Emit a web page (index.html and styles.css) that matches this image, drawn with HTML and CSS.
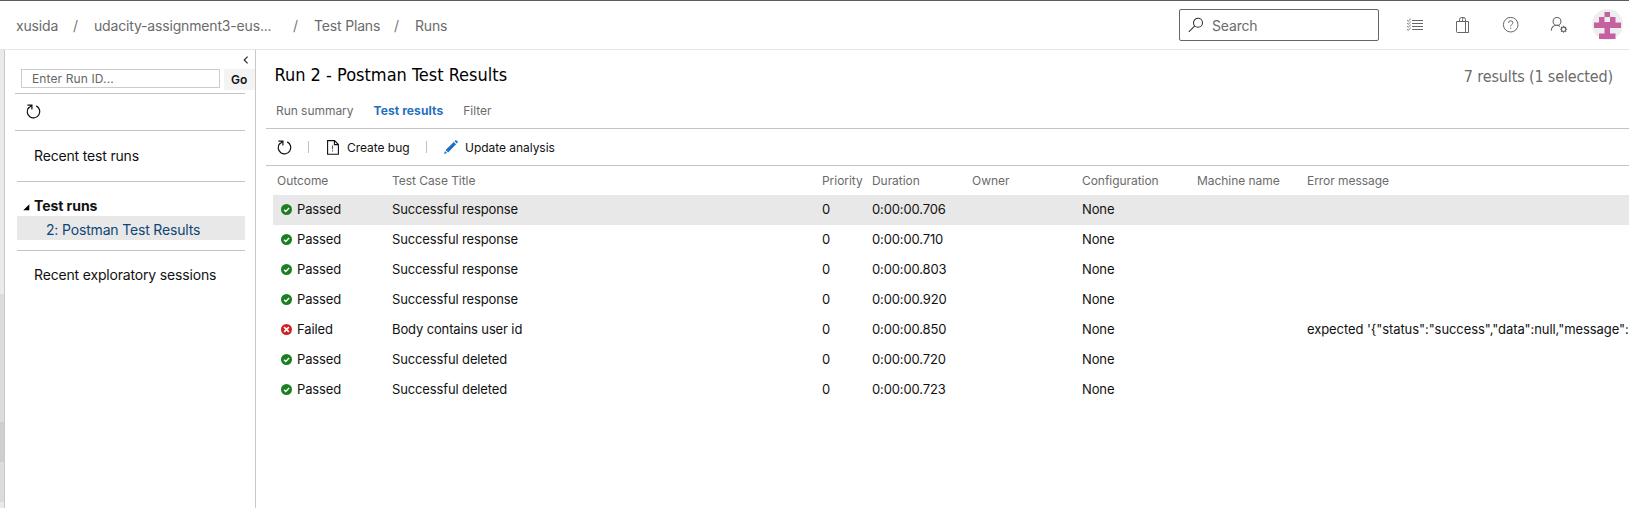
FILE: index.html
```
<!DOCTYPE html>
<html lang="en">
<head>
<meta charset="utf-8">
<title>Runs - Test Plans</title>
<link rel="stylesheet" href="styles.css">
</head>
<body>
<svg class="defs" aria-hidden="true">
  <symbol id="refresh" viewBox="0 0 15 15">
    <path d="M10.2 1.9A6.3 6.3 0 1 1 2.7 3.5M1.4 1.1H5.9V5.4M5.7 1.3L2.7 4.1" fill="none" stroke="currentColor" stroke-width="1.2"/>
  </symbol>
  <symbol id="passed" viewBox="0 0 12 12">
    <circle cx="6" cy="6" r="6" fill="#1b7f22"/>
    <path d="M3.3 6.3L5.2 8.1L8.8 4.4" fill="none" stroke="#fff" stroke-width="1.5"/>
  </symbol>
  <symbol id="failed" viewBox="0 0 12 12">
    <circle cx="6" cy="6" r="6" fill="#d3201f"/>
    <path d="M3.4 3.4L8.6 8.6M8.6 3.4L3.4 8.6" fill="none" stroke="#fff" stroke-width="1.8"/>
  </symbol>
</svg>

<header class="topbar">
  <nav class="crumbs">
    <span class="crumb crumb-org">xusida</span><span class="slash">/</span>
    <span class="crumb crumb-project">udacity-assignment3-eus...</span><span class="slash">/</span>
    <span class="crumb crumb-plans">Test Plans</span><span class="slash">/</span>
    <span class="crumb">Runs</span>
  </nav>
  <div class="search">
    <svg width="16" height="16" viewBox="0 0 16 16" fill="none" stroke="#333" stroke-width="1.1"><circle cx="10" cy="5.7" r="4.5"/><path d="M6.8 8.9L.8 14.9"/></svg>
    <span>Search</span>
  </div>
  <div class="tools">
    <svg width="18" height="18" viewBox="0 0 18 18" fill="none" stroke="#666" stroke-width="1"><path d="M6 4.5H17M6 7.5H17M6 10.5H17M6 13.5H17"/><path d="M1 4.2L2.2 5.3L4.8 2.8M1 7.2L2.2 8.3L4.8 5.8M1 10.2L2.2 11.3L4.8 8.8M1 13.2L2.2 14.3L4.8 11.8" stroke-width=".9"/></svg>
    <svg width="18" height="18" viewBox="0 0 18 18" fill="none" stroke="#666" stroke-width="1"><path d="M2.5 5.5H14.5V16.5H3.5Q2.5 16.5 2.5 15.5ZM11.5 5.5V15.5Q11.5 16.5 12.5 16.5H13.5Q14.5 16.5 14.5 15.5M5.5 5.5V3.5Q5.5 1.5 7.5 1.5H9.5Q11.5 1.5 11.5 3.5V5.5M8.5 5.5V3.5Q8.5 1.5 10 1.5"/></svg>
    <svg width="18" height="18" viewBox="0 0 18 18" fill="none" stroke="#666" stroke-width="1"><circle cx="8.7" cy="8.7" r="7.3"/><path d="M6.5 6.9Q6.5 4.8 8.7 4.8T10.9 6.7Q10.9 7.8 9.6 8.6Q8.7 9.2 8.7 10.4M8.7 11.7V12.9"/></svg>
    <svg width="18" height="18" viewBox="0 0 18 18" fill="none" stroke="#666" stroke-width="1.1"><circle cx="7" cy="5.4" r="3.9"/><path d="M1.3 14.6Q1.6 9.4 7 9.3Q8.5 9.3 10 10.6"/><circle cx="13.6" cy="13.3" r="2.2"/><path d="M13.6 9.8V11.1M13.6 15.5V16.8M10.1 13.3H11.4M15.8 13.3H17.1M11.1 10.8L12.1 11.8M15.1 14.8L16.1 15.8M16.1 10.8L15.1 11.8M12.1 14.8L11.1 15.8"/></svg>
  </div>
  <svg class="avatar" width="31" height="31" viewBox="0 0 31 31"><circle cx="15.5" cy="15.5" r="15.5" fill="#eee"/><path fill="#c561a1" d="M12.5 3H18V8H12.5ZM7 8H12.5V13H18V8H23.5V13.5H29V19H18V24.5H23.5V30H7V24.5H12.5V19H2V13.5H7Z"/></svg>
</header>

<div class="body">
  <div class="rail"><div class="track"><div class="thumb"></div></div></div>

  <aside class="side">
    <div class="collapse"><svg width="6" height="8" viewBox="0 0 6 8" fill="none" stroke="#222" stroke-width="1.1"><path d="M4.6 .7L1.2 4L4.6 7.3"/></svg></div>
    <div class="lookup"><div class="run-id">Enter Run ID...</div><div class="go">Go</div></div>
    <div class="side-tools"><svg width="15" height="15"><use href="#refresh"/></svg></div>
    <div class="group recent">Recent test runs</div>
    <div class="group runs">
      <div class="runs-title"><svg width="7" height="7" viewBox="0 0 7 7"><path d="M6.3 .3V6.3H.3Z"/></svg><b>Test runs</b></div>
      <div class="run-item">2: Postman Test Results</div>
    </div>
    <div class="sessions">Recent exploratory sessions</div>
  </aside>

  <main class="main">
    <div class="heading"><h1>Run 2 - Postman Test Results</h1><span class="count">7 results (1 selected)</span></div>
    <nav class="tabs"><span>Run summary</span><b>Test results</b><span>Filter</span></nav>
    <div class="toolbar">
      <svg width="15" height="15"><use href="#refresh"/></svg>
      <i class="sep sep-first"></i>
      <svg class="bug" width="12" height="15" viewBox="0 0 12 15" fill="none" stroke="#111" stroke-width="1.1"><path d="M.6 .6H7.5L11.4 4.5V14.2H.6ZM7.4 .8V4.6H11.2"/><path d="M5.5 5.5V9.2M5.5 10.3V11.6" stroke="#555"/></svg>
      <span class="create">Create bug</span>
      <i class="sep"></i>
      <svg class="pencil" width="14" height="14" viewBox="0 0 14 14" fill="#1f6fc2"><path d="M1.6 9.9L9.7 1.9L12.1 4.3L4.1 12.4ZM10.5 1.2L11.4 .3Q12.2-.1 13.1.8T13.7 2.5L12.8 3.5ZM1 11L3 13L0 14Z"/></svg>
      <span>Update analysis</span>
    </div>
    <div class="grid">
      <div class="row head"><span>Outcome</span><span>Test Case Title</span><span>Priority</span><span>Duration</span><span>Owner</span><span>Configuration</span><span>Machine name</span><span>Error message</span></div>
      <div class="row selected"><span class="outcome"><svg width="11" height="11"><use href="#passed"/></svg>Passed</span><span>Successful response</span><span>0</span><span>0:00:00.706</span><span></span><span>None</span><span></span><span></span></div>
      <div class="row"><span class="outcome"><svg width="11" height="11"><use href="#passed"/></svg>Passed</span><span>Successful response</span><span>0</span><span>0:00:00.710</span><span></span><span>None</span><span></span><span></span></div>
      <div class="row"><span class="outcome"><svg width="11" height="11"><use href="#passed"/></svg>Passed</span><span>Successful response</span><span>0</span><span>0:00:00.803</span><span></span><span>None</span><span></span><span></span></div>
      <div class="row"><span class="outcome"><svg width="11" height="11"><use href="#passed"/></svg>Passed</span><span>Successful response</span><span>0</span><span>0:00:00.920</span><span></span><span>None</span><span></span><span></span></div>
      <div class="row"><span class="outcome"><svg width="11" height="11"><use href="#failed"/></svg>Failed</span><span>Body contains user id</span><span>0</span><span>0:00:00.850</span><span></span><span>None</span><span></span><span class="error">expected '{"status":"success","data":null,"message":</span></div>
      <div class="row"><span class="outcome"><svg width="11" height="11"><use href="#passed"/></svg>Passed</span><span>Successful deleted</span><span>0</span><span>0:00:00.720</span><span></span><span>None</span><span></span><span></span></div>
      <div class="row"><span class="outcome"><svg width="11" height="11"><use href="#passed"/></svg>Passed</span><span>Successful deleted</span><span>0</span><span>0:00:00.723</span><span></span><span>None</span><span></span><span></span></div>
    </div>
  </main>
</div>
</body>
</html>
```

FILE: styles.css
```
* { box-sizing: border-box; }

body {
  margin: 0;
  height: 508px;
  overflow: hidden;
  background: #fff;
  color: #111;
  font: 14px/20px Inter, "Liberation Sans", sans-serif;
  letter-spacing: -0.17px;
  white-space: nowrap;
}

svg { display: block; flex: none; }
.defs { display: none; }

/* Top bar */
.topbar {
  display: flex;
  align-items: center;
  height: 50px;
  padding-left: 16px;
  border-top: 1px solid #5c5c60;
  border-bottom: 1px solid #e6e6e6;
  color: #6b6b6b;
}
.crumbs { display: flex; flex: none; width: 1163px; padding-top: 1px; }
.crumb-org { width: 57px; }
.crumb-project { width: 199px; }
.crumb-plans { width: 80px; }
.slash { width: 21px; color: #777; }
.search {
  display: flex;
  align-items: center;
  gap: 8px;
  width: 200px;
  height: 32px;
  padding-left: 8px;
  border: 1px solid #666;
  border-radius: 2px;
}
.search span { padding-top: 2px; }
.tools { display: flex; gap: 30px; margin-left: 27px; }
.avatar { margin: -1px 0 0 24px; }

/* Left rail and sidebar */
.body { display: flex; height: 458px; }
.rail { width: 5px; padding-top: 244px; background: #eaeaea; border-right: 1px solid #c8c8c8; }
.track { height: 208px; padding-top: 128px; background: #dcdcdc; }
.thumb { height: 40px; background: #cfcfcf; }

.side { width: 251px; border-right: 1px solid #c8c8c8; }
.collapse { display: flex; justify-content: flex-end; height: 19px; padding: 6px 6px 0 0; }
.lookup { display: flex; gap: 4px; height: 24px; padding-left: 16px; font-size: 12px; letter-spacing: 0.12px; }
.run-id { width: 199px; height: 19px; padding-left: 10px; border: 1px solid #ccc; color: #666; line-height: 18px; }
.go { flex: 1; height: 21px; padding-left: 7px; background: #f3f3f3; font-weight: 600; line-height: 22px; }
.side-tools {
  display: flex;
  align-items: center;
  height: 38px;
  margin: 0 10px;
  padding: 0 0 1px 11px;
  border: solid #c4c4c4;
  border-width: 1px 0;
}
.group { margin: 0 10px 0 12px; border-bottom: 1px solid #c4c4c4; }
.recent { height: 51px; padding: 15px 0 0 17px; }
.runs { height: 69px; padding-top: 14px; }
.runs-title { display: flex; align-items: center; gap: 4px; height: 20px; padding-left: 6px; letter-spacing: -0.05px; }
.runs-title svg { margin-top: 2px; }
.run-item { height: 24px; padding-left: 29px; background: #e8e8e8; color: #0f4677; line-height: 28px; }
.sessions { padding: 14px 0 0 29px; }

/* Results pane */
.main { flex: 1; min-width: 0; padding-left: 10px; overflow: hidden; }
.heading { display: flex; justify-content: space-between; height: 38px; padding: 13px 16px 0 8.5px; font-family: "DejaVu Sans Condensed", "DejaVu Sans", sans-serif; }
h1 { margin: 0; color: #000; font-size: 18px; font-weight: 400; line-height: 24px; letter-spacing: 0; }
.count { padding-top: 2px; color: #6b6b6b; font-size: 16px; line-height: 24px; letter-spacing: -0.14px; }
.tabs {
  display: flex;
  height: 41px;
  padding: 13px 0 0 10px;
  border-bottom: 1px solid #c4c4c4;
  color: #6b6b6b;
  font-size: 12px;
  letter-spacing: -0.04px;
}
.tabs b { margin: 0 20px; color: #1f6fc2; letter-spacing: 0.1px; }
.toolbar {
  display: flex;
  align-items: center;
  height: 37px;
  padding-left: 11px;
  border-bottom: 1px solid #c4c4c4;
  font-size: 12px;
  letter-spacing: -0.04px;
}
.toolbar span { padding-top: 1px; }
.sep { width: 1px; height: 12px; background: #c0c0c0; }
.sep-first { margin-left: 16px; }
.bug { margin: 0 8px 0 18px; }
.create { width: 79px; }
.pencil { margin: 0 7px 0 17px; }

.grid { padding-left: 7px; }
.row {
  display: grid;
  grid-template-columns: 115px 430px 50px 100px 110px 115px 110px 1fr;
  align-items: center;
  height: 30px;
  padding: 0 0 2px 4px;
  font-size: 13px;
  letter-spacing: -0.13px;
}
.head { height: 29px; padding: 1px 0 0 4px; color: #6b6b6b; font-size: 12px; letter-spacing: -0.05px; }
.selected { background: #e8e8e8; }
.outcome { display: flex; align-items: center; gap: 5px; padding-left: 4px; }
.error { letter-spacing: -0.08px; }
```
